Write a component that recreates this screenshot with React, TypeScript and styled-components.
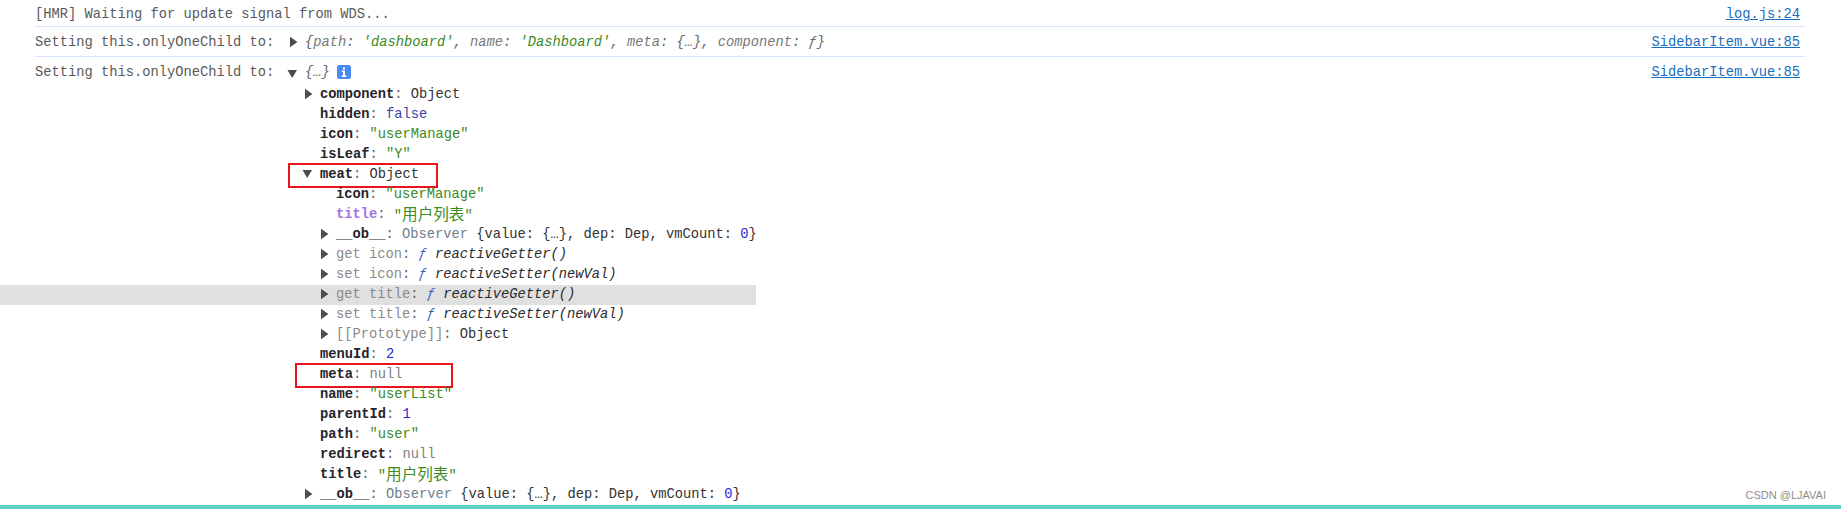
import React from "react";
import styled, { createGlobalStyle } from "styled-components";

const Global = createGlobalStyle`
  html, body { margin: 0; padding: 0; background: #fff; }
  body { width: 1841px; height: 509px; overflow: hidden; }
`;

const Page = styled.div`
  position: relative;
  width: 1841px;
  height: 509px;
  display: flex;
  flex-direction: column;
  background: #fff;
  font-family: "Liberation Mono", "Noto Sans CJK SC", monospace;
  font-size: 13.75px;
  line-height: 20px;
  color: #5a5a5a;
`;

const Log = styled.div`
  flex: 1;
  min-height: 0;
  overflow: hidden;
`;

const BottomBar = styled.div`
  height: 4px;
  background: #5fd0ca;
`;

const Message = styled.div<{ $top: number; $bottom: number; $ruled?: boolean }>`
  display: flex;
  align-items: flex-start;
  margin: 0 36px 0 35px;
  padding: ${(p) => p.$top}px 5px ${(p) => p.$bottom}px 0;
  border-bottom: ${(p) => (p.$ruled ? "1px solid #d3e3fb" : "none")};
`;

const Label = styled.span`
  width: 254px;
  flex: none;
  white-space: pre;
`;

const Preview = styled.span`
  display: flex;
  align-items: center;
  flex: 1;
  font-style: italic;
  color: #666;
  white-space: pre;
`;

const SourceLink = styled.a`
  margin-left: auto;
  color: #1a6fc0;
  text-decoration: underline;
  white-space: pre;
`;

const Tree = styled.div`
  width: 756px;
`;

const TreeRow = styled.div<{ $level: number; $selected?: boolean }>`
  position: relative;
  display: flex;
  align-items: center;
  height: 20px;
  padding-left: ${(p) => 304 + p.$level * 16}px;
  background: ${(p) => (p.$selected ? "#e0e0e0" : "transparent")};
  white-space: pre;
`;

const ArrowSlot = styled.svg<{ $low?: boolean }>`
  flex: none;
  width: 16px;
  height: 12px;
  margin: ${(p) => (p.$low ? "2px 0 0" : "0 0 3px")};
  overflow: visible;
  fill: #4c4c4c;
`;

const Key = styled.b<{ $tone?: "normal" | "fresh" | "dim" }>`
  font-weight: ${(p) => (p.$tone === "dim" ? 400 : 700)};
  color: ${(p) =>
    p.$tone === "fresh" ? "#a274e2" : p.$tone === "dim" ? "#8a8a8a" : "#26232b"};
`;

const Punct = styled.span`
  color: #666;
`;

const Plain = styled.span`
  color: #333;
`;

const Str = styled.span`
  color: #3c8a22;
`;

const Kw = styled.span`
  color: #3b3fa8;
`;

const Num = styled.span`
  color: #2a2ad0;
`;

const Nil = styled.span`
  color: #808080;
`;

const Obs = styled.span`
  color: #6f7f8c;
`;

const Fn = styled.i`
  color: #3f5fc4;
`;

const Call = styled.i`
  color: #2b2b2b;
`;

const Cjk = styled.span`
  font-family: "Noto Sans CJK SC", sans-serif;
  font-size: 15.6px;
`;

const PreviewKey = styled.span`
  color: #777;
`;

const InfoIcon = styled.svg`
  flex: none;
  width: 14px;
  height: 14px;
  margin: 0 0 3px 7px;
`;

const RedBox = styled.div<{ $left: number; $width: number }>`
  position: absolute;
  left: ${(p) => p.$left}px;
  top: -2px;
  width: ${(p) => p.$width}px;
  height: 25px;
  box-sizing: border-box;
  border: 2px solid #e8141f;
  pointer-events: none;
`;

const Watermark = styled.div`
  position: absolute;
  right: 15px;
  bottom: 7px;
  font-family: "Liberation Sans", sans-serif;
  font-size: 11px;
  line-height: 14px;
  color: #8d8d8d;
`;

const Right = () => (
  <ArrowSlot viewBox="0 0 16 12">
    <path d="M1 0.8 L8.4 6 L1 11.2 Z" />
  </ArrowSlot>
);

const Down = ({ low }: { low?: boolean }) => (
  <ArrowSlot viewBox="0 0 16 12" $low={low}>
    <path d="M-1.5 2 L8 2 L3.2 10 Z" />
  </ArrowSlot>
);

const NoArrow = () => <ArrowSlot viewBox="0 0 16 12" />;

const Obsrv = () => (
  <>
    <Key>__ob__</Key>
    <Punct>: </Punct>
    <Obs>Observer </Obs>
    <Plain>
      {"{value: {…}, dep: Dep, vmCount: "}
    </Plain>
    <Num>0</Num>
    <Plain>{"}"}</Plain>
  </>
);

const Accessor = ({ name, fn, selected }: { name: string; fn: string; selected?: boolean }) => (
  <TreeRow $level={1} $selected={selected}>
    <Right />
    <Key $tone="dim">{name}</Key>
    <Punct>: </Punct>
    <Fn>ƒ </Fn>
    <Call>{fn}</Call>
  </TreeRow>
);

const Prop = ({ level = 0, k, tone, children }: { level?: number; k: string; tone?: "normal" | "fresh"; children: React.ReactNode }) => (
  <TreeRow $level={level}>
    <NoArrow />
    <Key $tone={tone}>{k}</Key>
    <Punct>: </Punct>
    {children}
  </TreeRow>
);

export default function App() {
  return (
    <Page>
      <Global />
      <Log>
        <Message $top={5} $bottom={1} $ruled>
          <span>[HMR] Waiting for update signal from WDS...</span>
          <SourceLink>log.js:24</SourceLink>
        </Message>
        <Message $top={6} $bottom={3} $ruled>
          <Label>Setting this.onlyOneChild to:</Label>
          <Preview>
            <Right />
            {"{"}
            <PreviewKey>path</PreviewKey>: <Str>'dashboard'</Str>, <PreviewKey>name</PreviewKey>: <Str>'Dashboard'</Str>, <PreviewKey>meta</PreviewKey>: {"{…}"}, <PreviewKey>component</PreviewKey>: ƒ{"}"}
          </Preview>
          <SourceLink>SidebarItem.vue:85</SourceLink>
        </Message>
        <Message $top={6} $bottom={2}>
          <Label>Setting this.onlyOneChild to:</Label>
          <Preview>
            <Down low />
            {"{…}"}
            <InfoIcon viewBox="0 0 14 14">
              <rect width="14" height="14" rx="2.5" fill="#4a8af4" />
              <rect x="6" y="2.4" width="2" height="2" fill="#fff" />
              <path d="M4.8 5.6 H8 V10.6 H9.4 V12 H4.6 V10.6 H6 V7 H4.8 Z" fill="#fff" />
            </InfoIcon>
          </Preview>
          <SourceLink>SidebarItem.vue:85</SourceLink>
        </Message>
        <Tree>
          <TreeRow $level={0}>
            <Right />
            <Key>component</Key>
            <Punct>: </Punct>
            <Plain>Object</Plain>
          </TreeRow>
          <Prop k="hidden"><Kw>false</Kw></Prop>
          <Prop k="icon"><Str>"userManage"</Str></Prop>
          <Prop k="isLeaf"><Str>"Y"</Str></Prop>
          <TreeRow $level={0}>
            <Down />
            <Key>meat</Key>
            <Punct>: </Punct>
            <Plain>Object</Plain>
            <RedBox $left={288} $width={150} />
          </TreeRow>
          <Prop level={1} k="icon"><Str>"userManage"</Str></Prop>
          <Prop level={1} k="title" tone="fresh"><Str>"<Cjk>用户列表</Cjk>"</Str></Prop>
          <TreeRow $level={1}>
            <Right />
            <Obsrv />
          </TreeRow>
          <Accessor name="get icon" fn="reactiveGetter()" />
          <Accessor name="set icon" fn="reactiveSetter(newVal)" />
          <Accessor name="get title" fn="reactiveGetter()" selected />
          <Accessor name="set title" fn="reactiveSetter(newVal)" />
          <TreeRow $level={1}>
            <Right />
            <Key $tone="dim">[[Prototype]]</Key>
            <Punct>: </Punct>
            <Plain>Object</Plain>
          </TreeRow>
          <Prop k="menuId"><Num>2</Num></Prop>
          <TreeRow $level={0}>
            <NoArrow />
            <Key>meta</Key>
            <Punct>: </Punct>
            <Nil>null</Nil>
            <RedBox $left={295} $width={158} />
          </TreeRow>
          <Prop k="name"><Str>"userList"</Str></Prop>
          <Prop k="parentId"><Num>1</Num></Prop>
          <Prop k="path"><Str>"user"</Str></Prop>
          <Prop k="redirect"><Nil>null</Nil></Prop>
          <Prop k="title"><Str>"<Cjk>用户列表</Cjk>"</Str></Prop>
          <TreeRow $level={0}>
            <Right />
            <Obsrv />
          </TreeRow>
        </Tree>
      </Log>
      <BottomBar />
      <Watermark>CSDN @LJAVAI</Watermark>
    </Page>
  );
}
